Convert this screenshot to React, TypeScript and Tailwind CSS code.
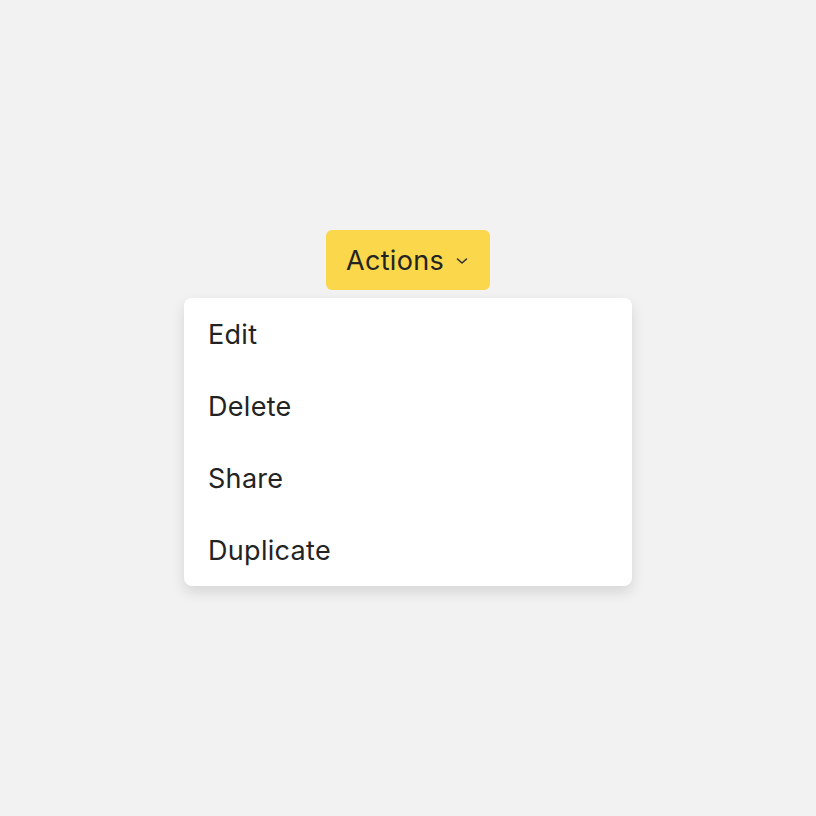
import React from "react";

const items = ["Edit", "Delete", "Share", "Duplicate"];

export default function App() {
  return (
    <div
      className="w-screen h-screen bg-[#f2f2f2] flex flex-col items-center justify-center text-[#232323]"
      style={{ fontFamily: "Inter, 'Noto Sans', sans-serif" }}
    >
      <button className="h-[60px] pt-[2px] pl-[20px] pr-[22px] rounded-md bg-[#fad74b] flex items-center gap-[12px] text-[27px] tracking-[0.3px]">
        <span>Actions</span>
        <svg width="12" height="12" viewBox="0 0 12 12" fill="none">
          <path d="M1.5 4 L6 8 L10.5 4" stroke="#333" strokeWidth="1.6" strokeLinecap="round" strokeLinejoin="round" />
        </svg>
      </button>
      <div className="mt-2 w-[448px] bg-white rounded-lg shadow-[0_6px_14px_rgba(0,0,0,0.12)] flex flex-col">
        {items.map((item) => (
          <div key={item} className="h-[72px] pt-[2px] flex items-center pl-[24px] text-[27px] tracking-[0.3px]">
            {item}
          </div>
        ))}
      </div>
    </div>
  );
}
